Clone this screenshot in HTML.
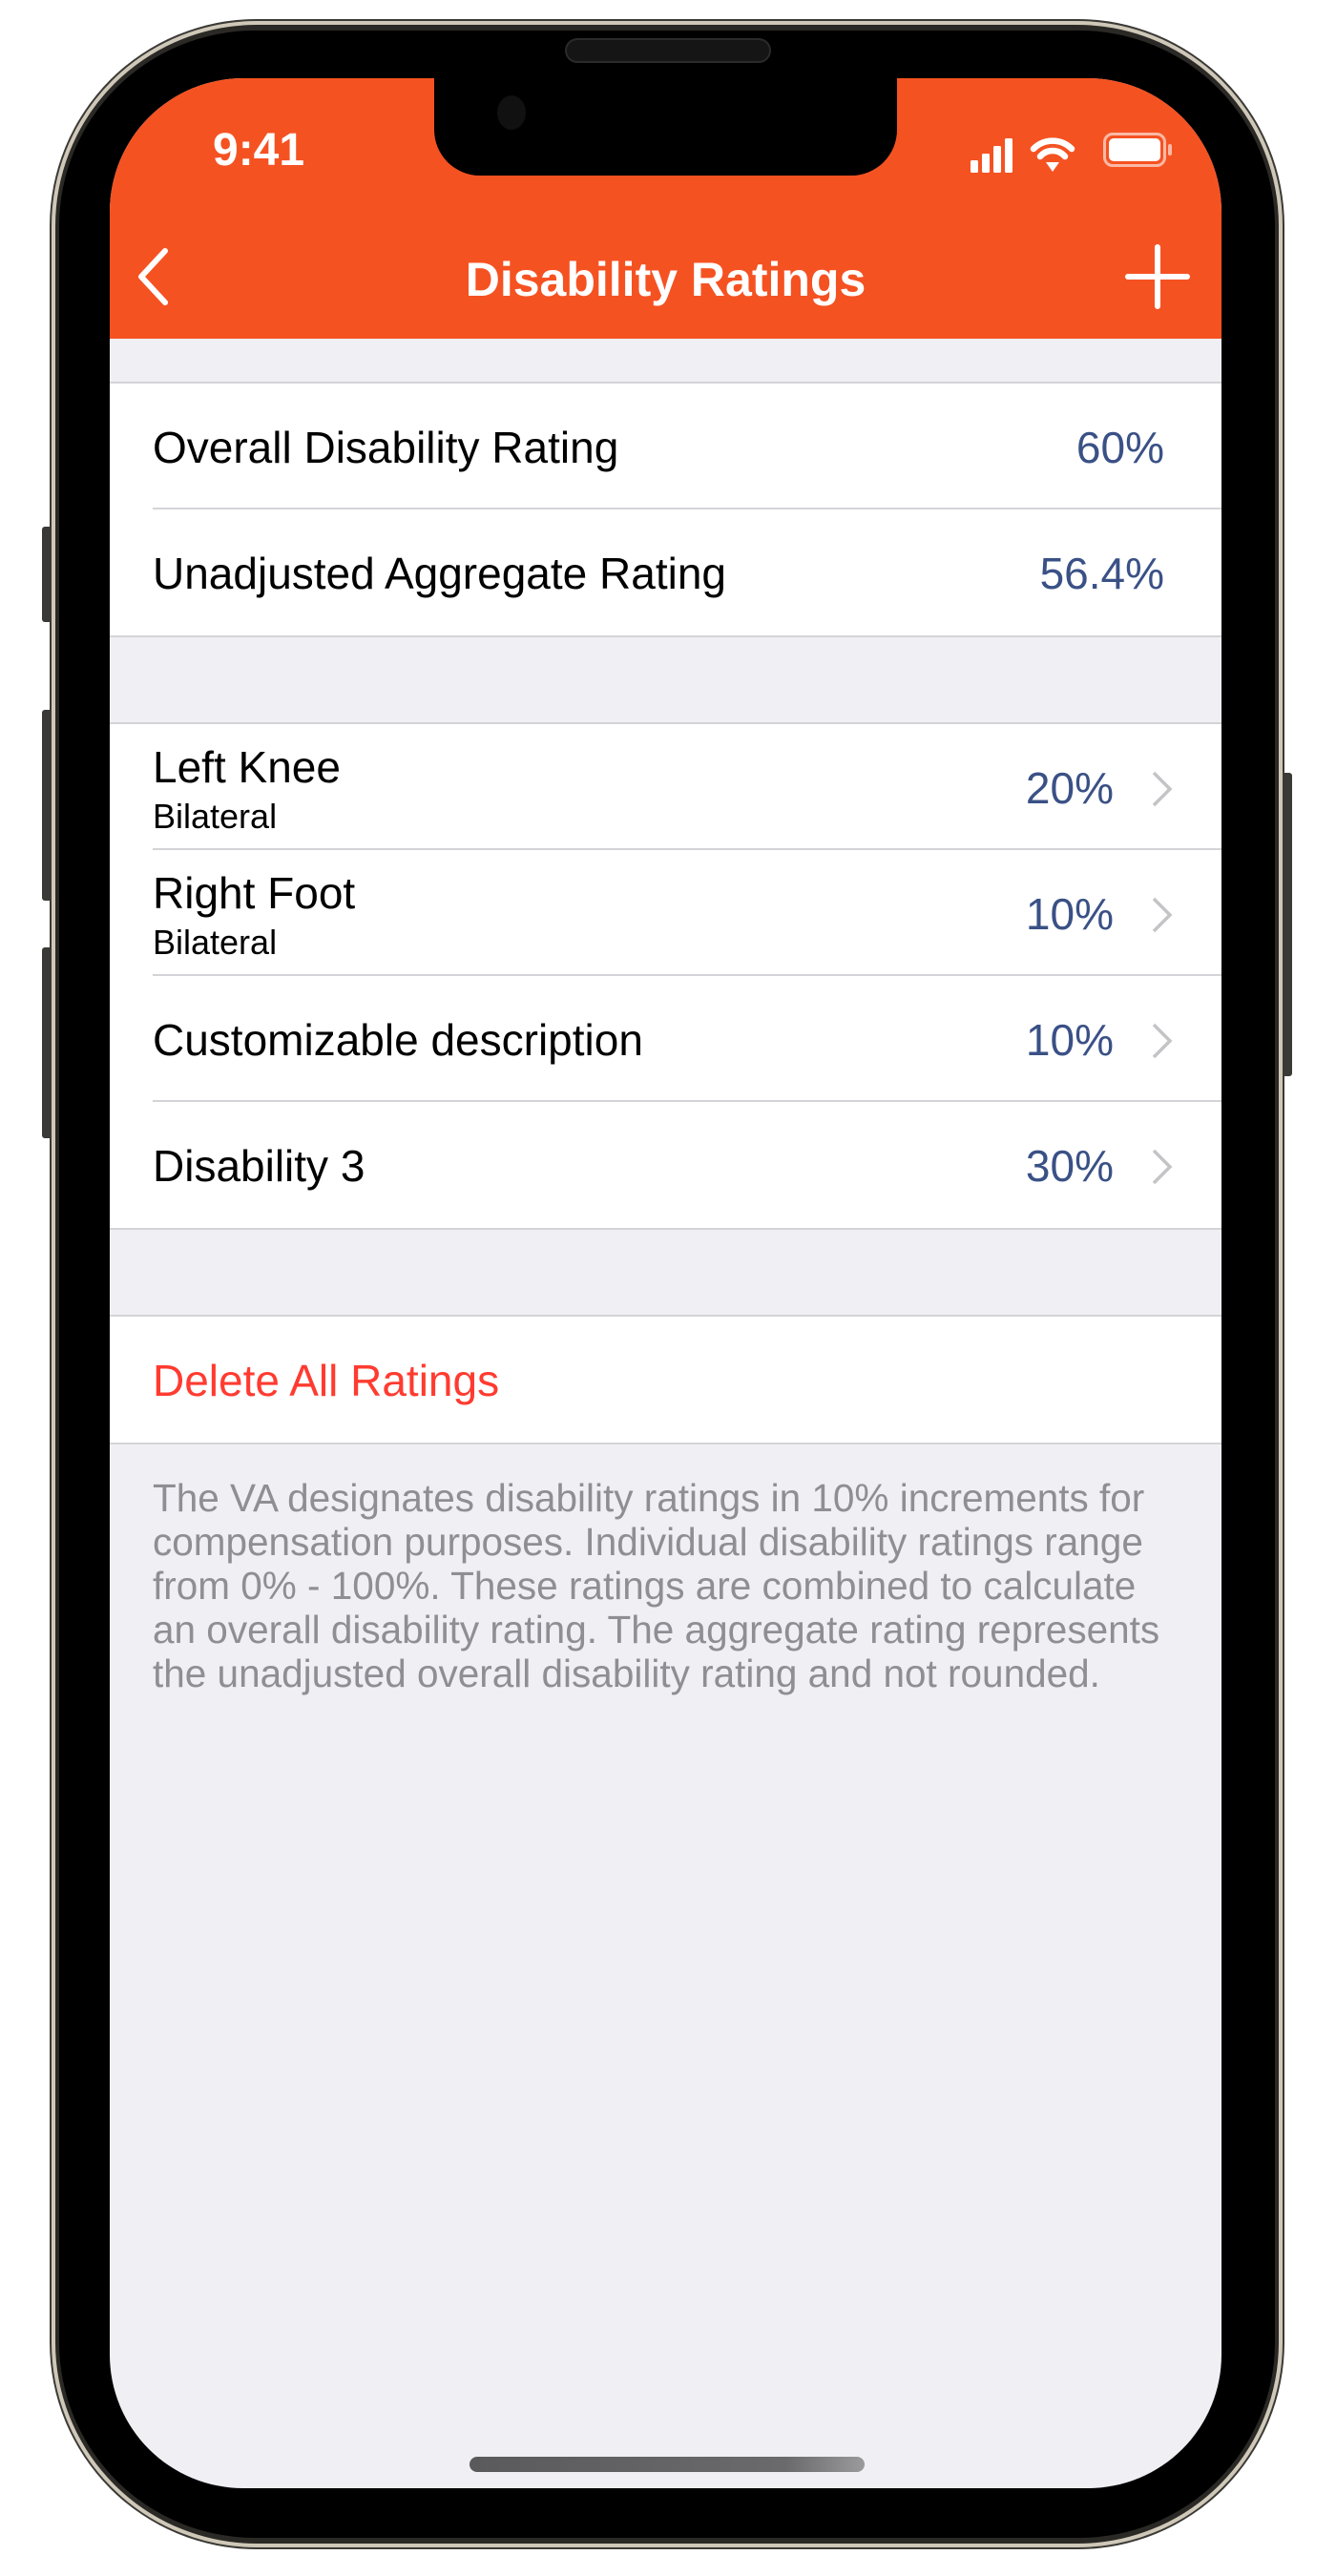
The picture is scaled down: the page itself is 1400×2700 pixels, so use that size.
<!DOCTYPE html>
<html><head><meta charset="utf-8"><style>
*{margin:0;padding:0;box-sizing:border-box}
body{width:1400px;height:2700px;background:#fff;position:relative;overflow:hidden;font-family:"Liberation Sans",sans-serif}
.btn{position:absolute;background:#3a3935;border-radius:3px}
.outer{position:absolute;left:54px;top:22px;width:1290px;height:2648px;border-radius:215px;background:#2a2925;border:4px solid #cfc8b8;box-shadow:0 0 0 2px #3a3935}
.bezel{position:absolute;left:62px;top:32px;width:1274px;height:2628px;border-radius:205px;background:#000}
.screen{position:absolute;left:115px;top:82px;width:1165px;height:2526px;border-radius:140px;background:#efeff4;overflow:hidden}
.nav{position:absolute;left:0;top:0;width:100%;height:273px;background:#f55222}
.notch{position:absolute;left:340px;top:-2px;width:485px;height:104px;background:#000;border-radius:0 0 48px 48px}
.speaker{position:absolute;left:592px;top:40px;width:216px;height:26px;border-radius:13px;background:#151515;border:2px solid #2a2a2a}
.time{position:absolute;left:108px;top:48px;color:#fff;font-size:48px;font-weight:bold}
.title{position:absolute;left:0;width:100%;top:182px;text-align:center;color:#fff;font-size:50px;font-weight:bold}
.group{position:absolute;left:0;width:100%;background:#fff;border-top:2px solid #d4d4d8;border-bottom:2px solid #d4d4d8}
.row{position:relative;height:132px;border-bottom:2px solid #d4d4d8;margin-left:45px}
.row:last-child{border-bottom:none}
.t{position:absolute;left:0;top:40px;font-size:46px;color:#000}
.t2{top:18px}
.sub{position:absolute;left:0;top:76px;font-size:36px;color:#000}
.v{position:absolute;right:60px;top:40px;font-size:46px;color:#3a5186}
.vc{right:113px}
.chev{position:absolute;right:50px;top:48px}
.foot{position:absolute;left:45px;top:1465px;font-size:40.5px;line-height:46px;color:#8e8e93;white-space:nowrap}
.home{position:absolute;left:377px;top:2493px;width:414px;height:16px;border-radius:8px;background:linear-gradient(90deg,#5a5a5c,#6a6a6c 80%,#9a9a9c)}
</style></head><body>
<div class="btn" style="left:44px;top:552px;width:12px;height:100px"></div>
<div class="btn" style="left:44px;top:744px;width:12px;height:200px"></div>
<div class="btn" style="left:44px;top:993px;width:12px;height:200px"></div>
<div class="btn" style="left:1342px;top:810px;width:12px;height:318px"></div>
<div class="outer"></div>
<div class="bezel"></div>
<div class="speaker"></div>
<div class="screen">
 <div class="nav">
  <div class="time">9:41</div>
  <div class="notch"><div style="position:absolute;left:66px;top:20px;width:30px;height:36px;border-radius:50%;background:#111"></div></div>
  <svg style="position:absolute;left:902px;top:58px" width="135" height="44" viewBox="0 0 135 44">
   <rect x="0" y="28" width="8" height="13" rx="1.5" fill="#fff"/><rect x="12" y="21" width="8" height="20" rx="1.5" fill="#fff"/><rect x="24" y="13" width="8" height="28" rx="1.5" fill="#fff"/><rect x="36" y="5" width="8" height="36" rx="1.5" fill="#fff"/>
   <path d="M66 16 A28 28 0 0 1 106 16 M73 24 A17 17 0 0 1 99 24" stroke="#fff" stroke-width="6.5" fill="none" stroke-linecap="round"/>
   <path d="M79 30 L93 30 L86 40 Z" fill="#fff"/>
  </svg>
  <div style="position:absolute;left:1041px;top:57px;width:66px;height:36px;border:3px solid #fbb9a5;border-radius:10px"><div style="position:absolute;left:3px;top:3px;right:3px;bottom:3px;background:#fff;border-radius:5px"></div></div>
  <div style="position:absolute;left:1109px;top:69px;width:4px;height:12px;background:#fbb9a5;border-radius:2px"></div>
  <svg style="position:absolute;left:25px;top:177px" width="40" height="62" viewBox="0 0 40 62"><path d="M33 4 L8 31 L33 58" stroke="#fff" stroke-width="6" fill="none" stroke-linecap="round" stroke-linejoin="round"/></svg>
  <div class="title">Disability Ratings</div>
  <svg style="position:absolute;left:1064px;top:174px" width="68" height="68" viewBox="0 0 68 68"><path d="M34 3 V65 M3 34 H65" stroke="#fff" stroke-width="6" stroke-linecap="round"/></svg>
 </div>
 <div class="group" style="top:318px">
  <div class="row"><div class="t">Overall Disability Rating</div><div class="v">60%</div></div>
  <div class="row"><div class="t">Unadjusted Aggregate Rating</div><div class="v">56.4%</div></div>
 </div>
 <div class="group" style="top:675px">
  <div class="row"><div class="t t2">Left Knee</div><div class="sub">Bilateral</div><div class="v vc">20%</div><svg class="chev" width="24" height="40" viewBox="0 0 24 40"><path d="M3 3 L20 20 L3 37" stroke="#c4c4c7" stroke-width="3.5" fill="none"/></svg></div>
  <div class="row"><div class="t t2">Right Foot</div><div class="sub">Bilateral</div><div class="v vc">10%</div><svg class="chev" width="24" height="40" viewBox="0 0 24 40"><path d="M3 3 L20 20 L3 37" stroke="#c4c4c7" stroke-width="3.5" fill="none"/></svg></div>
  <div class="row"><div class="t">Customizable description</div><div class="v vc">10%</div><svg class="chev" width="24" height="40" viewBox="0 0 24 40"><path d="M3 3 L20 20 L3 37" stroke="#c4c4c7" stroke-width="3.5" fill="none"/></svg></div>
  <div class="row"><div class="t">Disability 3</div><div class="v vc">30%</div><svg class="chev" width="24" height="40" viewBox="0 0 24 40"><path d="M3 3 L20 20 L3 37" stroke="#c4c4c7" stroke-width="3.5" fill="none"/></svg></div>
 </div>
 <div class="group" style="top:1296px">
  <div class="row"><div class="t" style="color:#ff3b30">Delete All Ratings</div></div>
 </div>
 <div class="foot">The VA designates disability ratings in 10% increments for<br>compensation purposes. Individual disability ratings range<br>from 0% - 100%. These ratings are combined to calculate<br>an overall disability rating. The aggregate rating represents<br>the unadjusted overall disability rating and not rounded.</div>
 <div class="home"></div>
</div>
</body></html>
